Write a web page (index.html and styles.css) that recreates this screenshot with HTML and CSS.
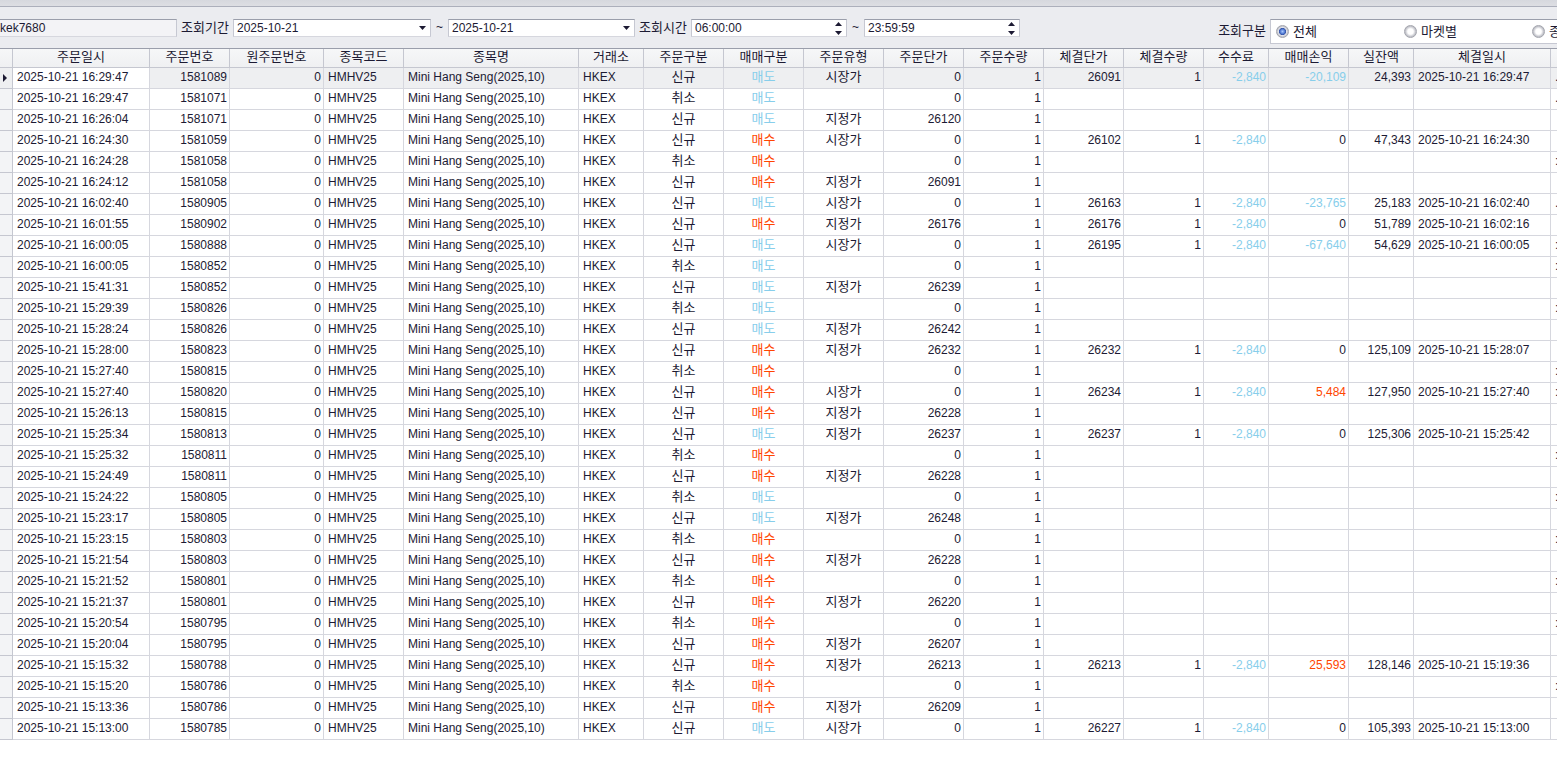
FILE: index.html
```html
<!DOCTYPE html>
<html lang="ko">
<head>
    <meta charset="UTF-8">
    <meta name="viewport" content="width=device-width, initial-scale=1.0">
    <title>주문내역</title>
    <link rel="stylesheet" href="styles.css">
</head>
<body>

    <div class="title-strip"></div>

    <!-- Search conditions -->
    <form class="toolbar">
        <input class="field account" type="text" value="kek7680" aria-label="계좌" readonly>

        <label for="dateFrom">조회기간</label>
        <div class="picker date-from">
            <select class="field" id="dateFrom"><option>2025-10-21</option></select>
            <svg class="arrow" width="7" height="4" viewBox="0 0 7 4"><path d="M0 0h7L3.5 4z"/></svg>
        </div>
        <span class="tilde">~</span>
        <div class="picker date-to">
            <select class="field" aria-label="종료일"><option>2025-10-21</option></select>
            <svg class="arrow" width="7" height="4" viewBox="0 0 7 4"><path d="M0 0h7L3.5 4z"/></svg>
        </div>

        <label for="timeFrom">조회시간</label>
        <div class="picker time">
            <input class="field" id="timeFrom" type="text" value="06:00:00">
            <svg class="arrow" width="7" height="13" viewBox="0 0 7 13"><path d="M0 4h7L3.5 0zM0 9h7L3.5 13z"/></svg>
        </div>
        <span class="tilde">~</span>
        <div class="picker time">
            <input class="field" type="text" value="23:59:59" aria-label="종료시간">
            <svg class="arrow" width="7" height="13" viewBox="0 0 7 13"><path d="M0 4h7L3.5 0zM0 9h7L3.5 13z"/></svg>
        </div>

        <span class="kind-label" id="kindLabel">조회구분</span>
        <div class="kind-box" role="radiogroup" aria-labelledby="kindLabel">
            <label><input type="radio" name="kind" checked>전체</label>
            <label><input type="radio" name="kind">마켓별</label>
            <label><input type="radio" name="kind">종목별</label>
        </div>
    </form>

    <!-- Order list -->
    <div class="grid">
        <table>
            <colgroup>
                <col class="w-mark"><col class="w-time"><col class="w-mid"><col class="w-orig"><col class="w-mid">
                <col class="w-name"><col class="w-small"><col class="w-mid"><col class="w-mid"><col class="w-mid">
                <col class="w-mid"><col class="w-mid"><col class="w-mid"><col class="w-mid"><col class="w-small">
                <col class="w-mid"><col class="w-small"><col class="w-time"><col class="w-note">
            </colgroup>
            <thead>
                <tr>
                    <th></th><th>주문일시</th><th>주문번호</th><th>원주문번호</th><th>종목코드</th>
                    <th>종목명</th><th>거래소</th><th>주문구분</th><th>매매구분</th><th>주문유형</th>
                    <th>주문단가</th><th>주문수량</th><th>체결단가</th><th>체결수량</th><th>수수료</th>
                    <th>매매손익</th><th>실잔액</th><th>체결일시</th><th></th>
                </tr>
            </thead>
            <tbody id="orders"></tbody>
        </table>
    </div>

    <script src="script.js"></script>
</body>
</html>
```

FILE: styles.css
```css
* {
    box-sizing: border-box;
}
body {
    margin: 0;
    background: white;
    color: #1c1a33;
    font-family: "Liberation Sans", "Noto Sans CJK KR", sans-serif;
    font-size: 12px;
    overflow: hidden;
}
.title-strip {
    height: 7px;
    background: linear-gradient(#d6d8de, #dddee3);
    border-bottom: 1px solid #acafbb;
}
.toolbar {
    display: flex;
    align-items: flex-start;
    height: 41px;
    padding-top: 12px;
    background: #ebecf0;
}
.toolbar label,
.kind-label {
    font-size: 13px;
    line-height: 18px;
    white-space: nowrap;
}
.toolbar > label {
    width: 56px;
    padding-left: 4px;
    flex: none;
}
.field {
    display: block;
    width: 100%;
    height: 18px;
    margin: 0;
    padding: 0 3px;
    appearance: none;
    background: white;
    border: 1px solid #c6c8d2;
    border-top-color: #9a9eab;
    border-bottom-color: #d6d7de;
    border-radius: 0;
    color: inherit;
    font-family: inherit;
    font-size: 12px;
    line-height: 16px;
    outline: none;
}
.account {
    width: 177px;
    padding: 0;
    flex: none;
    background: #f3f3f6;
    border-left: none;
}
.picker {
    position: relative;
    flex: none;
}
.date-from {
    width: 198px;
}
.date-to {
    width: 187px;
}
.time {
    width: 156px;
}
.arrow {
    position: absolute;
    top: 0;
    bottom: 0;
    right: 5px;
    margin: auto 0;
    fill: #1c1a33;
    pointer-events: none;
}
.tilde {
    width: 17px;
    flex: none;
    line-height: 17px;
    text-align: center;
}
.kind-label {
    margin-left: auto;
    padding: 3px 4px 0 0;
}
.kind-box {
    display: flex;
    flex: none;
    width: 287px;
    height: 25px;
    padding-left: 5px;
    overflow: hidden;
    background: white;
    border: 1px solid #c6c8d2;
    border-top-color: #9a9eab;
    border-right: none;
}
.kind-box label {
    display: flex;
    align-items: center;
    gap: 4px;
    width: 128px;
    flex: none;
}
.kind-box input {
    appearance: none;
    width: 13px;
    height: 13px;
    margin: 0;
    border: 1px solid #a3a5ad;
    border-radius: 50%;
    background: radial-gradient(circle, white 35%, #c3c4cb 65%);
}
.kind-box input:checked {
    background: radial-gradient(circle, #a9c8fa 0, #5d86dc 25%, #3454a8 42%, #e4e6ee 50%, #c3c4cb 68%);
}
.grid {
    overflow: hidden;
    border-top: 1px solid #9a9eab;
}
table {
    width: 1751px;
    table-layout: fixed;
    border-collapse: separate;
    border-spacing: 0;
}
.w-mark { width: 13px; }
.w-time { width: 137px; }
.w-mid { width: 80px; }
.w-orig { width: 94px; }
.w-name { width: 175px; }
.w-small { width: 65px; }
.w-note { width: 200px; }
th {
    height: 19px;
    padding: 0 0 2px;
    background: linear-gradient(#f6f7f8, #eff0f2);
    border-right: 1px solid #c5c7d0;
    border-bottom: 1px solid #c5c7d0;
    font-size: 13px;
    font-weight: normal;
    line-height: 16px;
}
td {
    height: 21px;
    padding: 0 2px 2px 4px;
    border-right: 1px solid #d6d7de;
    border-bottom: 1px solid #d6d7de;
    line-height: 16px;
    white-space: nowrap;
}
td.mark {
    padding: 0 0 0 3px;
    background: #f3f4f6;
    border-color: #c5c7d0;
}
td.mark svg {
    display: block;
    fill: #1c1a33;
}
td.num {
    text-align: right;
}
td.word {
    padding: 0 0 2px;
    font-size: 13px;
    text-align: center;
}
.selected td {
    background: #eeeff1;
}
.selected td.focused {
    background: white;
}
td.sell,
td.minus {
    color: #87ceeb;
}
td.buy,
td.plus {
    color: #ff4500;
}
```

FILE: script.js
```js
// time, order no, 주문구분, 매매구분, 주문유형, 주문단가, [체결단가, 매매손익, 실잔액, 체결시각], note
const orders = [
    ["16:29:47", "1581089", "신규", "매도", "시장가", "0", ["26091", "-20,109", "24,393", "16:29:47"], "."],
    ["16:29:47", "1581071", "취소", "매도", "", "0", null, "."],
    ["16:26:04", "1581071", "신규", "매도", "지정가", "26120", null, ""],
    ["16:24:30", "1581059", "신규", "매수", "시장가", "0", ["26102", "0", "47,343", "16:24:30"], ""],
    ["16:24:28", "1581058", "취소", "매수", "", "0", null, ":"],
    ["16:24:12", "1581058", "신규", "매수", "지정가", "26091", null, ""],
    ["16:02:40", "1580905", "신규", "매도", "시장가", "0", ["26163", "-23,765", "25,183", "16:02:40"], "."],
    ["16:01:55", "1580902", "신규", "매수", "지정가", "26176", ["26176", "0", "51,789", "16:02:16"], ""],
    ["16:00:05", "1580888", "신규", "매도", "시장가", "0", ["26195", "-67,640", "54,629", "16:00:05"], ":"],
    ["16:00:05", "1580852", "취소", "매도", "", "0", null, ":"],
    ["15:41:31", "1580852", "신규", "매도", "지정가", "26239", null, ""],
    ["15:29:39", "1580826", "취소", "매도", "", "0", null, ":"],
    ["15:28:24", "1580826", "신규", "매도", "지정가", "26242", null, ""],
    ["15:28:00", "1580823", "신규", "매수", "지정가", "26232", ["26232", "0", "125,109", "15:28:07"], ""],
    ["15:27:40", "1580815", "취소", "매수", "", "0", null, ":"],
    ["15:27:40", "1580820", "신규", "매수", "시장가", "0", ["26234", "5,484", "127,950", "15:27:40"], ":"],
    ["15:26:13", "1580815", "신규", "매수", "지정가", "26228", null, ""],
    ["15:25:34", "1580813", "신규", "매도", "지정가", "26237", ["26237", "0", "125,306", "15:25:42"], ""],
    ["15:25:32", "1580811", "취소", "매수", "", "0", null, ":"],
    ["15:24:49", "1580811", "신규", "매수", "지정가", "26228", null, ""],
    ["15:24:22", "1580805", "취소", "매도", "", "0", null, ":"],
    ["15:23:17", "1580805", "신규", "매도", "지정가", "26248", null, ""],
    ["15:23:15", "1580803", "취소", "매수", "", "0", null, ":"],
    ["15:21:54", "1580803", "신규", "매수", "지정가", "26228", null, ""],
    ["15:21:52", "1580801", "취소", "매수", "", "0", null, ":"],
    ["15:21:37", "1580801", "신규", "매수", "지정가", "26220", null, ""],
    ["15:20:54", "1580795", "취소", "매수", "", "0", null, ":"],
    ["15:20:04", "1580795", "신규", "매수", "지정가", "26207", null, ""],
    ["15:15:32", "1580788", "신규", "매수", "지정가", "26213", ["26213", "25,593", "128,146", "15:19:36"], ""],
    ["15:15:20", "1580786", "취소", "매수", "", "0", null, ":"],
    ["15:13:36", "1580786", "신규", "매수", "지정가", "26209", null, ""],
    ["15:13:00", "1580785", "신규", "매도", "시장가", "0", ["26227", "0", "105,393", "15:13:00"], ""]
];

const day = "2025-10-21 ";
const marker = '<svg width="4" height="8" viewBox="0 0 4 8"><path d="M0 0v8l4-4z"/></svg>';

function cell(text, cls) {
    return `<td class="${cls || ""}">${text}</td>`;
}

function profitClass(value) {
    if (value.startsWith("-")) return "num minus";
    return value === "0" ? "num" : "num plus";
}

document.getElementById("orders").innerHTML = orders.map((order, i) => {
    const [time, no, kind, side, type, price, fill, note] = order;
    const filled = fill
        ? cell(fill[0], "num") + cell("1", "num") + cell("-2,840", "num minus") +
          cell(fill[1], profitClass(fill[1])) + cell(fill[2], "num") + cell(day + fill[3])
        : cell("").repeat(6);

    return `<tr class="${i === 0 ? "selected" : ""}">` +
        cell(i === 0 ? marker : "", "mark") +
        cell(day + time, "focused") +
        cell(no, "num") +
        cell("0", "num") +
        cell("HMHV25") +
        cell("Mini Hang Seng(2025,10)") +
        cell("HKEX") +
        cell(kind, "word") +
        cell(side, side === "매도" ? "word sell" : "word buy") +
        cell(type, "word") +
        cell(price, "num") +
        cell("1", "num") +
        filled +
        cell(note) +
        "</tr>";
}).join("");
```
